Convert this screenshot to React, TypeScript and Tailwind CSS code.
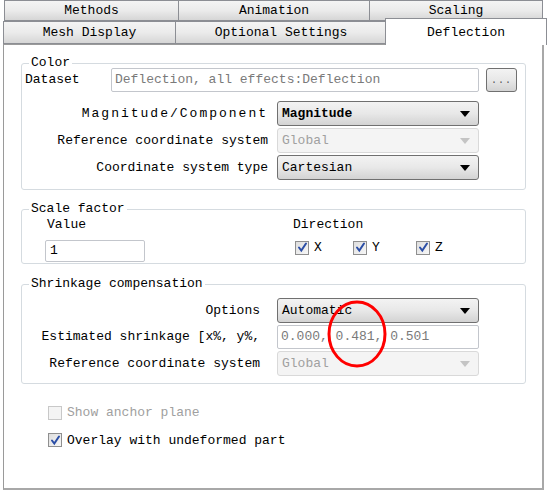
import React from "react";

const font = "font-['Liberation_Mono','DejaVu_Sans_Mono',monospace]";

function Tab({ label, w, active }: { label: string; w: string; active?: boolean }) {
  if (active) {
    return (
      <div
        className={`relative z-10 -mt-[3px] h-[27px] ${w} -ml-[2px] border border-b-0 border-[#8c8e94] bg-white flex justify-center pt-[4px] text-black`}
      >
        {label}
      </div>
    );
  }
  return (
    <div
      className={`${w} h-full border border-[#8c8e94] bg-gradient-to-b from-[#f4f4f4] via-[#ebebeb] to-[#d6d6d6] flex items-center justify-center pt-px text-black -ml-px first:ml-0`}
    >
      {label}
    </div>
  );
}

function Combo({ value, disabled, bold }: { value: string; disabled?: boolean; bold?: boolean }) {
  return (
    <div
      className={`w-[202px] h-[25px] rounded-[3px] border flex items-center justify-between pl-[4px] pr-[8px] ${
        disabled
          ? "border-[#d9d9d9] bg-[#f4f4f4] text-[#a0a0a0]"
          : "border-[#707070] bg-gradient-to-b from-[#f3f3f3] via-[#e8e8e8] to-[#d3d3d3] text-black"
      } ${bold ? "font-bold" : ""}`}
    >
      <span>{value}</span>
      <svg width="10" height="6" viewBox="0 0 10 6">
        <path d="M0 0 L10 0 L5 6 Z" fill={disabled ? "#c4c4c4" : "#000"} />
      </svg>
    </div>
  );
}

function Check({ checked, disabled, label }: { checked?: boolean; disabled?: boolean; label: string }) {
  return (
    <div className="flex items-center">
      <div
        className={`w-[14px] h-[14px] border flex items-center justify-center ${
          disabled ? "border-[#c8c8c8] bg-[#f4f4f4]" : "border-[#8f8f8f] bg-gradient-to-br from-[#dedede] to-[#f7f7f7]"
        }`}
      >
        {checked && (
          <svg width="11" height="11" viewBox="0 0 11 11">
            <path d="M2 5.5 L4.3 8.5 L9 1.5" stroke="#2b4ea6" strokeWidth="2" fill="none" strokeLinecap="round" />
          </svg>
        )}
      </div>
      <span className={`ml-[5px] ${disabled ? "text-[#a0a0a0]" : "text-black"}`}>{label}</span>
    </div>
  );
}

function Group({ title, className, children }: { title: string; className?: string; children: React.ReactNode }) {
  return (
    <fieldset className={`w-[505px] border border-[#d5dbe0] rounded-[3px] ${className ?? ""}`}>
      <legend className="ml-[7px] px-[2px] leading-[12px] text-black">{title}</legend>
      {children}
    </fieldset>
  );
}

export default function App() {
  return (
    <div className={`relative w-[547px] h-[493px] bg-white overflow-hidden text-[13px] ${font}`}>
      {/* Tab rows */}
      <div className="flex h-[21px] pl-[4px]">
        <Tab label="Methods" w="w-[175px]" />
        <Tab label="Animation" w="w-[192px]" />
        <Tab label="Scaling" w="w-[174px]" />
      </div>
      <div className="flex h-[23px] pl-[3px]">
        <Tab label="Mesh Display" w="w-[173px]" />
        <Tab label="Optional Settings" w="w-[212px]" />
        <Tab label="Deflection" w="w-[162px]" active />
      </div>

      {/* Panel */}
      <div className="mx-[3px] h-[446px] border border-[#9a9a9a] border-r-[2px] border-b-[2px] border-r-[#a8a8a8] border-b-[#a8a8a8] bg-white pl-[17px] pt-[12px]">
        {/* Color */}
        <Group title="Color" className="h-[133px]">
          <div className="flex items-center -mt-[1px] pl-[3px]">
            <span className="w-[86px] text-black">Dataset</span>
            <div className="w-[368px] h-[24px] border border-[#c3c6cc] rounded-[2px] flex items-center pl-[3px] text-[#7a7a7a]">
              Deflection, all effects:Deflection
            </div>
            <div className="ml-[7px] w-[31px] h-[24px] rounded-[3px] border border-[#707070] bg-gradient-to-b from-[#f3f3f3] via-[#e8e8e8] to-[#d3d3d3] flex items-center justify-center text-[#555] text-[10px] tracking-[1px]">
              ...
            </div>
          </div>
          <div className="mt-[9px] flex flex-col gap-[2px]">
            <div className="flex items-center">
              <span className="w-[246px] text-right text-black tracking-[2px]">Magnitude/Component</span>
              <div className="ml-[9px]">
                <Combo value="Magnitude" bold />
              </div>
            </div>
            <div className="flex items-center">
              <span className="w-[246px] text-right text-black">Reference coordinate system</span>
              <div className="ml-[9px]">
                <Combo value="Global" disabled />
              </div>
            </div>
            <div className="flex items-center">
              <span className="w-[246px] text-right text-black">Coordinate system type</span>
              <div className="ml-[9px]">
                <Combo value="Cartesian" />
              </div>
            </div>
          </div>
        </Group>

        {/* Scale factor */}
        <Group title="Scale factor" className="mt-[13px] h-[61px]">
          <div className="flex">
            <div className="flex flex-col pl-[23px] pt-[2px]">
              <span className="leading-[16px] pl-[2px] text-black">Value</span>
              <div className="mt-[7px] w-[100px] h-[22px] border border-[#c3c6cc] rounded-[2px] flex items-center pl-[4px] text-black">
                1
              </div>
            </div>
            <div className="flex flex-col ml-[148px] pt-[2px]">
              <span className="leading-[16px] text-black">Direction</span>
              <div className="mt-[5px] flex pl-[2px]">
                <div className="w-[58px]">
                  <Check checked label="X" />
                </div>
                <div className="w-[63px]">
                  <Check checked label="Y" />
                </div>
                <Check checked label="Z" />
              </div>
            </div>
          </div>
        </Group>

        {/* Shrinkage compensation */}
        <Group title="Shrinkage compensation" className="mt-[14px] h-[106px]">
          <div className="mt-[8px] flex flex-col gap-[2px]">
            <div className="flex items-center">
              <span className="w-[238px] text-right text-black">Options</span>
              <div className="ml-[17px]">
                <Combo value="Automatic" />
              </div>
            </div>
            <div className="flex items-center">
              <span className="w-[238px] text-right text-black">Estimated shrinkage [x%, y%,</span>
              <div className="ml-[17px] w-[202px] h-[24px] border border-[#c3c6cc] rounded-[2px] flex items-center pl-[3px] text-[#7a7a7a]">
                0.000, 0.481, 0.501
              </div>
            </div>
            <div className="flex items-center">
              <span className="w-[238px] text-right text-black">Reference coordinate system</span>
              <div className="ml-[17px]">
                <Combo value="Global" disabled />
              </div>
            </div>
          </div>
        </Group>

        {/* Options */}
        <div className="mt-[19px] pl-[27px] flex flex-col gap-[8px]">
          <Check disabled label="Show anchor plane" />
          <Check checked label="Overlay with undeformed part" />
        </div>
      </div>

      {/* Red annotation circle */}
      <svg className="absolute left-[325px] top-[299px] pointer-events-none" width="64" height="70" viewBox="0 0 64 70">
        <ellipse cx="32" cy="35" rx="28" ry="32" stroke="#ff0000" strokeWidth="3" fill="none" />
      </svg>
    </div>
  );
}
